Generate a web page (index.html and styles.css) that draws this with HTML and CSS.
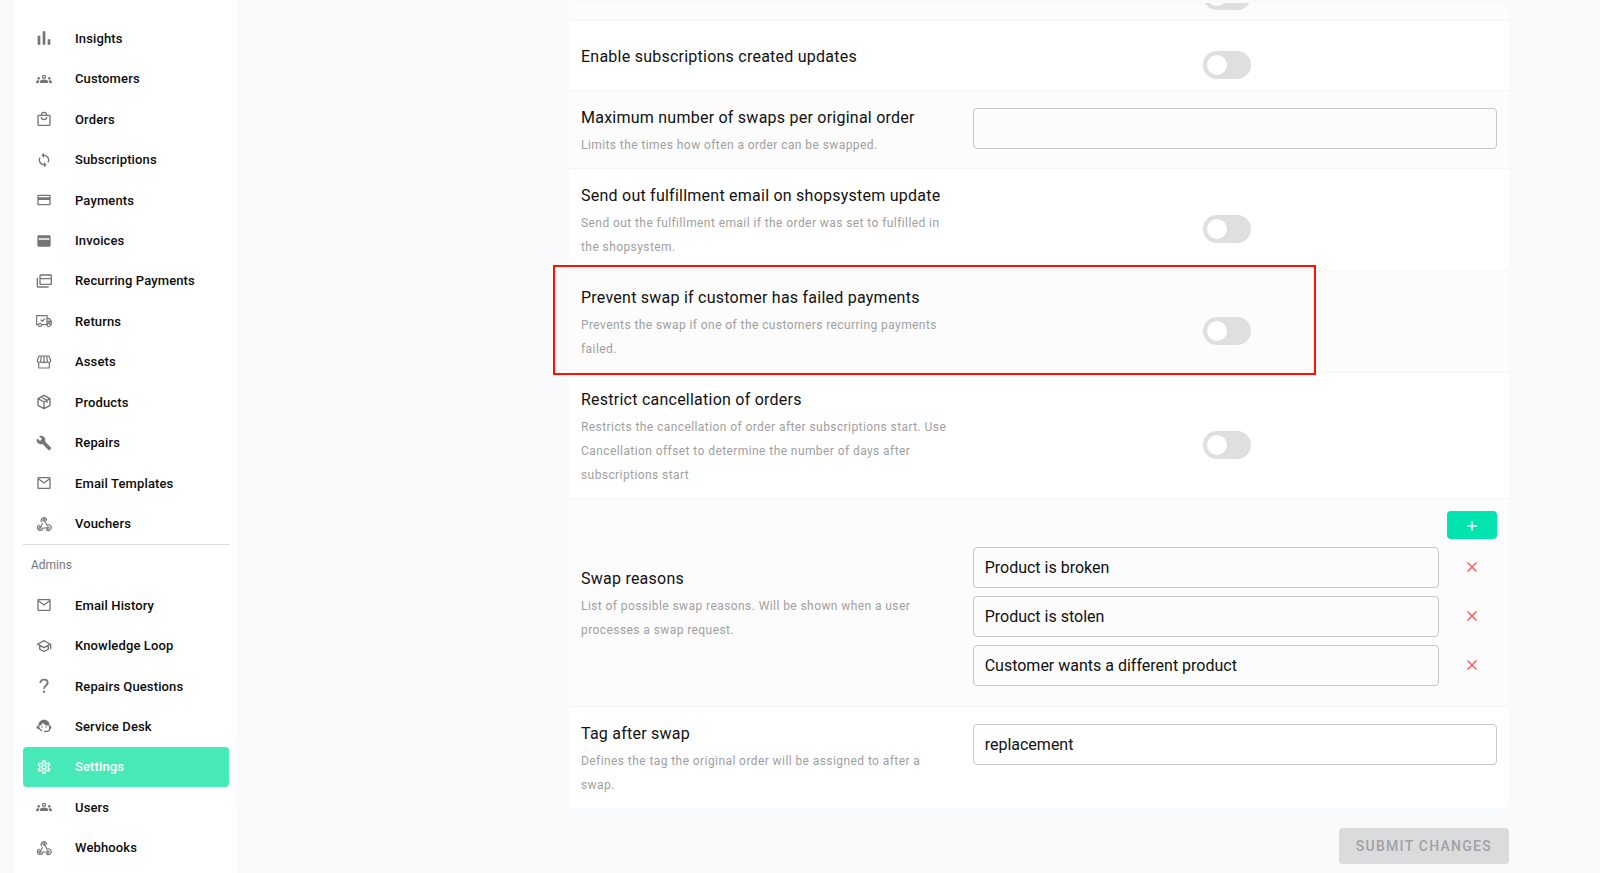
FILE: index.html
```html
<!DOCTYPE html>
<html lang="en">
<head>
<meta charset="utf-8">
<meta name="viewport" content="width=device-width, initial-scale=1">
<title>Settings</title>
<link rel="stylesheet" href="styles.css">
</head>
<body>
<svg class="sprite" aria-hidden="true">
  <symbol id="i-bars" viewBox="0 0 24 24"><path d="M2.500 8.500h4V22h-4zM10 2h4v20h-4zM17.500 14h4v8h-4z"/></symbol>
  <symbol id="i-group" viewBox="0 0 24 24"><path fill-rule="evenodd" d="M12 12.750c1.630 0 3.070.390 4.240.900 1.080.480 1.760 1.560 1.760 2.730V18H6v-1.610c0-1.180.680-2.260 1.760-2.730 1.170-.520 2.610-.910 4.240-.910zM4 13c1.100 0 2-.900 2-2s-.900-2-2-2-2 .900-2 2 .900 2 2 2zm1.130 1.100c-.370-.060-.740-.100-1.130-.100-.990 0-1.930.210-2.780.580C.480 14.900 0 15.620 0 16.430V18h4.500v-1.610c0-.830.230-1.610.630-2.290zM20 13c1.100 0 2-.900 2-2s-.900-2-2-2-2 .900-2 2 .900 2 2 2zm4 3.430c0-.810-.480-1.530-1.220-1.850-.850-.370-1.790-.580-2.780-.580-.390 0-.760.040-1.130.100.400.680.630 1.460.630 2.290V18H24v-1.570zM12 5.500a3.300 3.300 0 1 1 0 6.600 3.300 3.300 0 0 1 0-6.600zm0 1.900a1.400 1.400 0 1 0 0 2.800 1.400 1.400 0 0 0 0-2.800z"/></symbol>
  <symbol id="i-bag" viewBox="0 0 24 24"><path fill="none" stroke="currentColor" stroke-width="2" d="M4 6.500h16a1 1 0 0 1 1 1V20a1.500 1.500 0 0 1-1.500 1.500h-15A1.500 1.500 0 0 1 3 20V7.500a1 1 0 0 1 1-1zM8 9a4 4 0 0 0 8 0M8 6a4 4 0 0 1 8 0"/></symbol>
  <symbol id="i-sync" viewBox="0 0 24 24"><path d="M12 4V1L8 5l4 4V6c3.310 0 6 2.690 6 6 0 1.010-.250 1.970-.700 2.800l1.460 1.460C19.540 15.030 20 13.570 20 12c0-4.420-3.580-8-8-8zm0 14c-3.310 0-6-2.690-6-6 0-1.010.250-1.970.700-2.800L5.240 7.740C4.460 8.970 4 10.430 4 12c0 4.420 3.580 8 8 8v3l4-4-4-4v3z"/></symbol>
  <symbol id="i-card" viewBox="0 0 24 24"><path d="M20 4H4c-1.110 0-2 .890-2 2v12c0 1.110.890 2 2 2h16c1.110 0 2-.890 2-2V6c0-1.110-.890-2-2-2zm0 14H4v-6h16v6zm0-10H4V6h16v2z"/></symbol>
  <symbol id="i-invoice" viewBox="0 0 24 24"><path fill-rule="evenodd" d="M4 3.500h16a2 2 0 0 1 2 2v13a2 2 0 0 1-2 2H4a2 2 0 0 1-2-2v-13a2 2 0 0 1 2-2zM4 8v2.200h16V8z"/></symbol>
  <symbol id="i-cards" viewBox="0 0 24 24"><path fill="none" stroke="currentColor" stroke-width="2" d="M7 3h15a1 1 0 0 1 1 1v12a1 1 0 0 1-1 1H7a1 1 0 0 1-1-1V4a1 1 0 0 1 1-1zM6 8.500h17M2 7v13a1 1 0 0 0 1 1h16"/></symbol>
  <symbol id="i-truck" viewBox="0 0 24 24"><path fill="none" stroke="currentColor" stroke-width="1.800" d="M3.500 17.500H1V4h15.500v13.500H9M16.500 8.500h3.500l3 4v5h-1.500M7 10l2.500 2.500L13.500 8"/><circle cx="6" cy="18" r="2.300" fill="none" stroke="currentColor" stroke-width="1.800"/><circle cx="19" cy="18" r="2.300" fill="none" stroke="currentColor" stroke-width="1.800"/><path d="M17 11.500h6v3h-6z"/></symbol>
  <symbol id="i-store" viewBox="0 0 24 24"><path fill="none" stroke="currentColor" stroke-width="1.800" d="M4 12v8a1 1 0 0 0 1 1h14a1 1 0 0 0 1-1v-8M4.500 3h15L22 9.500a2.500 2.500 0 0 1-5 1 2.500 2.500 0 0 1-5 0 2.500 2.500 0 0 1-5 0 2.500 2.500 0 0 1-5-1zM8 3l-1 7.500M12 3v7.500M16 3l1 7.500"/></symbol>
  <symbol id="i-box" viewBox="0 0 24 24"><path fill="none" stroke="currentColor" stroke-width="2" stroke-linejoin="round" d="M12 2l9 5v10l-9 5-9-5V7zM3 7l9 5 9-5M12 12v10M7.500 4.500l9 5V13"/></symbol>
  <symbol id="i-wrench" viewBox="0 0 24 24"><path d="M22.700 19l-9.100-9.100c.900-2.300.400-5-1.500-6.900-2-2-5-2.400-7.400-1.300L9 6 6 9 1.600 4.700C.400 7.100.900 10.100 2.900 12.100c1.900 1.900 4.600 2.400 6.900 1.500l9.100 9.100c.400.400 1 .400 1.400 0l2.300-2.300c.500-.400.500-1.100.100-1.400z"/></symbol>
  <symbol id="i-mail" viewBox="0 0 24 24"><path fill="none" stroke="currentColor" stroke-width="2" d="M4 4h16a1 1 0 0 1 1 1v14a1 1 0 0 1-1 1H4a1 1 0 0 1-1-1V5a1 1 0 0 1 1-1zM4 6l8 6 8-6"/></symbol>
  <symbol id="i-hook" viewBox="0 0 24 24"><g fill="none" stroke="currentColor" stroke-width="1.700"><path d="M8.500 9.200A4.200 4.200 0 1 1 16 7M12.500 6l4 7.800a4.200 4.200 0 1 1-1.300 6.200M17.500 18H10.500a4.200 4.200 0 1 1-5-4.500M6 18l4-7.500"/><circle cx="12" cy="6" r="1.600"/><circle cx="6" cy="18" r="1.600"/><circle cx="18" cy="18" r="1.600"/></g></symbol>
  <symbol id="i-school" viewBox="0 0 24 24"><path fill="none" stroke="currentColor" stroke-width="2" d="M12 4L2.500 9.200 12 14.500l9.500-5.300zM5.500 11v5.500l6.500 3.700 6.500-3.700V11M22 9v8"/></symbol>
  <symbol id="i-help" viewBox="0 0 24 24"><path fill="none" stroke="currentColor" stroke-width="2.800" d="M6.500 7.500c0-3 2.200-5 5.500-5s5.500 2 5.500 4.800C17.500 11 12 11.500 12 16"/><path d="M10.500 19h3v3.200h-3z"/></symbol>
  <symbol id="i-agent" viewBox="0 0 24 24"><path fill="none" stroke="currentColor" stroke-width="1.800" d="M20.500 12v4a4 4 0 0 1-4 4H12M4 13a8 8 0 0 0 5.500 6.500"/><path d="M3.500 11.500C3.500 6 7 2.500 12 2.500s8.500 3.500 8.500 9h-2C15 11.500 12 10 10.500 7 9.500 9.500 7 11.500 3.500 12.500zM2 11.500h2v5H3a2 2 0 0 1-2-2v-2a1 1 0 0 1 1-1zM22 11.500h-2v5h1a2 2 0 0 0 2-2v-2a1 1 0 0 0-1-1z"/><circle cx="9" cy="13.500" r="1.200"/><circle cx="15" cy="13.500" r="1.200"/></symbol>
  <symbol id="i-cog" viewBox="0 0 24 24"><path d="M12,8A4,4 0 0,1 16,12A4,4 0 0,1 12,16A4,4 0 0,1 8,12A4,4 0 0,1 12,8M12,10A2,2 0 0,0 10,12A2,2 0 0,0 12,14A2,2 0 0,0 14,12A2,2 0 0,0 12,10M10,22C9.750,22 9.540,21.820 9.500,21.580L9.130,18.930C8.500,18.680 7.960,18.340 7.440,17.940L4.950,18.950C4.730,19.030 4.460,18.950 4.340,18.730L2.340,15.270C2.210,15.050 2.270,14.780 2.460,14.630L4.570,12.970L4.500,12L4.570,11L2.460,9.370C2.270,9.220 2.210,8.950 2.340,8.730L4.340,5.270C4.460,5.050 4.730,4.960 4.950,5.050L7.440,6.050C7.960,5.660 8.500,5.320 9.130,5.070L9.500,2.420C9.540,2.180 9.750,2 10,2H14C14.250,2 14.460,2.180 14.500,2.420L14.870,5.070C15.500,5.320 16.040,5.660 16.560,6.050L19.050,5.050C19.270,4.960 19.540,5.050 19.660,5.270L21.660,8.730C21.790,8.950 21.730,9.220 21.540,9.370L19.430,11L19.500,12L19.430,13L21.540,14.630C21.730,14.780 21.790,15.050 21.660,15.270L19.660,18.730C19.540,18.950 19.270,19.040 19.050,18.950L16.560,17.950C16.040,18.340 15.500,18.680 14.870,18.930L14.500,21.580C14.460,21.820 14.250,22 14,22H10M11.250,4L10.880,6.610C9.680,6.860 8.620,7.500 7.850,8.390L5.440,7.350L4.690,8.650L6.800,10.200C6.400,11.370 6.400,12.640 6.800,13.800L4.680,15.360L5.430,16.660L7.860,15.620C8.630,16.500 9.680,17.140 10.870,17.380L11.240,20H12.760L13.130,17.390C14.320,17.140 15.370,16.500 16.140,15.620L18.570,16.660L19.320,15.360L17.200,13.810C17.600,12.640 17.600,11.370 17.200,10.200L19.310,8.650L18.560,7.350L16.150,8.390C15.380,7.500 14.320,6.860 13.120,6.620L12.750,4H11.250Z"/></symbol>
  <symbol id="i-plus" viewBox="0 0 10 10"><path fill="none" stroke="currentColor" stroke-width="1.400" d="M5 0v10M0 5h10"/></symbol>
  <symbol id="i-x" viewBox="0 0 10 10"><path fill="none" stroke="currentColor" stroke-width="1.300" d="M.5.5l9 9M9.500.5l-9 9"/></symbol>
</svg>
<div class="layout">
  <nav class="sidebar" aria-label="Main">
    <ul class="nav nav-main">
      <li><a class="nav-link" href="#"><svg class="icon"><use href="#i-bars"/></svg>Insights</a></li>
      <li><a class="nav-link" href="#"><svg class="icon"><use href="#i-group"/></svg>Customers</a></li>
      <li><a class="nav-link" href="#"><svg class="icon"><use href="#i-bag"/></svg>Orders</a></li>
      <li><a class="nav-link" href="#"><svg class="icon"><use href="#i-sync"/></svg>Subscriptions</a></li>
      <li><a class="nav-link" href="#"><svg class="icon"><use href="#i-card"/></svg>Payments</a></li>
      <li><a class="nav-link" href="#"><svg class="icon"><use href="#i-invoice"/></svg>Invoices</a></li>
      <li><a class="nav-link" href="#"><svg class="icon"><use href="#i-cards"/></svg>Recurring Payments</a></li>
      <li><a class="nav-link" href="#"><svg class="icon"><use href="#i-truck"/></svg>Returns</a></li>
      <li><a class="nav-link" href="#"><svg class="icon"><use href="#i-store"/></svg>Assets</a></li>
      <li><a class="nav-link" href="#"><svg class="icon"><use href="#i-box"/></svg>Products</a></li>
      <li><a class="nav-link" href="#"><svg class="icon"><use href="#i-wrench"/></svg>Repairs</a></li>
      <li><a class="nav-link" href="#"><svg class="icon"><use href="#i-mail"/></svg>Email Templates</a></li>
      <li><a class="nav-link" href="#"><svg class="icon"><use href="#i-hook"/></svg>Vouchers</a></li>
    </ul>
    <h2 class="nav-heading">Admins</h2>
    <ul class="nav nav-admin">
      <li><a class="nav-link" href="#"><svg class="icon"><use href="#i-mail"/></svg>Email History</a></li>
      <li><a class="nav-link" href="#"><svg class="icon"><use href="#i-school"/></svg>Knowledge Loop</a></li>
      <li><a class="nav-link" href="#"><svg class="icon"><use href="#i-help"/></svg>Repairs Questions</a></li>
      <li><a class="nav-link" href="#"><svg class="icon"><use href="#i-agent"/></svg>Service Desk</a></li>
      <li><a class="nav-link active" href="#" aria-current="page"><svg class="icon"><use href="#i-cog"/></svg>Settings</a></li>
      <li><a class="nav-link" href="#"><svg class="icon"><use href="#i-group"/></svg>Users</a></li>
      <li><a class="nav-link" href="#"><svg class="icon"><use href="#i-hook"/></svg>Webhooks</a></li>
    </ul>
  </nav>
  <main class="content">
    <form class="settings">
      <div class="card">
        <div class="row row-cut">
          <div class="text"></div>
          <div class="control control-switch"><input class="switch" type="checkbox" aria-label="Setting"></div>
        </div>
        <div class="row">
          <div class="text"><label class="title" for="created">Enable subscriptions created updates</label></div>
          <div class="control control-switch"><input class="switch" type="checkbox" id="created"></div>
        </div>
        <div class="row">
          <div class="text"><label class="title" for="max">Maximum number of swaps per original order</label><p class="hint">Limits the times how often a order can be swapped.</p></div>
          <div class="control control-field"><input class="field" type="text" id="max"></div>
        </div>
        <div class="row">
          <div class="text"><label class="title" for="fulfil">Send out fulfillment email on shopsystem update</label><p class="hint">Send out the fulfillment email if the order was set to fulfilled in the shopsystem.</p></div>
          <div class="control control-switch"><input class="switch" type="checkbox" id="fulfil"></div>
        </div>
        <div class="row row-marked">
          <div class="text"><label class="title" for="prevent">Prevent swap if customer has failed payments</label><p class="hint">Prevents the swap if one of the customers recurring payments failed.</p></div>
          <div class="control control-switch"><input class="switch" type="checkbox" id="prevent"></div>
        </div>
        <div class="row">
          <div class="text"><label class="title" for="restrict">Restrict cancellation of orders</label><p class="hint">Restricts the cancellation of order after subscriptions start. Use Cancellation offset to determine the number of days after subscriptions start</p></div>
          <div class="control control-switch"><input class="switch" type="checkbox" id="restrict"></div>
        </div>
        <div class="row">
          <div class="text"><span class="title" id="reasons">Swap reasons</span><p class="hint">List of possible swap reasons. Will be shown when a user processes a swap request.</p></div>
          <div class="control reasons" role="group" aria-labelledby="reasons">
            <button class="add" type="button" aria-label="Add reason"><svg class="glyph"><use href="#i-plus"/></svg></button>
            <div class="reason"><input class="field" type="text" value="Product is broken" aria-label="Reason 1"><button class="remove" type="button" aria-label="Remove reason 1"><svg class="glyph"><use href="#i-x"/></svg></button></div>
            <div class="reason"><input class="field" type="text" value="Product is stolen" aria-label="Reason 2"><button class="remove" type="button" aria-label="Remove reason 2"><svg class="glyph"><use href="#i-x"/></svg></button></div>
            <div class="reason"><input class="field" type="text" value="Customer wants a different product" aria-label="Reason 3"><button class="remove" type="button" aria-label="Remove reason 3"><svg class="glyph"><use href="#i-x"/></svg></button></div>
          </div>
        </div>
        <div class="row">
          <div class="text"><label class="title" for="tag">Tag after swap</label><p class="hint">Defines the tag the original order will be assigned to after a swap.</p></div>
          <div class="control control-field"><input class="field" type="text" id="tag" value="replacement"></div>
        </div>
      </div>
      <button class="submit" type="submit" disabled>SUBMIT CHANGES</button>
    </form>
  </main>
</div>
</body>
</html>
```
FILE: styles.css
```css
* { box-sizing: border-box; }

body {
  margin: 0;
  background: #f9fafc;
  color: #111;
  font-family: Roboto, "Liberation Sans", sans-serif;
  font-size: 16px;
}

button, input { font: inherit; color: inherit; }

.sprite { display: none; }

.layout {
  display: flex;
  min-height: 100vh;
}

/* Sidebar */
.sidebar {
  flex: 0 0 222px;
  margin-left: 15px;
  padding: 18px 8px 4px;
  background: #fff;
}

.nav {
  display: grid;
  grid-auto-rows: 1fr;
  margin: 0;
  padding: 0;
  list-style: none;
}

.nav-main {
  min-height: 527px;
  border-bottom: 1px solid #dcdcdc;
}

.nav-admin { min-height: 283px; }

.nav-link {
  display: flex;
  align-items: center;
  gap: 23px;
  height: 100%;
  padding: 0 13px;
  border-radius: 4px;
  color: #0c0c0c;
  font-size: 13px;
  font-weight: 500;
  letter-spacing: 0.01em;
  text-decoration: none;
}

.icon {
  flex: none;
  width: 16px;
  height: 16px;
  color: #757575;
  fill: currentColor;
}

.nav-link.active { background: #47e9b9; color: #fff; }
.nav-link.active .icon { color: #fff; }

.nav-heading {
  margin: 0;
  padding: 0 8px;
  color: #757575;
  font-size: 12px;
  font-weight: 400;
  line-height: 40px;
}

/* Settings form */
.content {
  flex: 1;
  min-width: 0;
  padding: 3px 91px 8px 332px;
}

.settings {
  display: flex;
  flex-direction: column;
  gap: 20px;
}

.card {
  border-radius: 4px;
  background: #fff;
}

.row {
  position: relative;
  display: grid;
  grid-template-columns: 5fr 7fr;
  align-items: center;
  min-height: 70px;
  padding: 10px 0;
  border-top: 1px solid #f5f5f5;
}

.row:nth-child(odd) { background: #fcfcfc; }
.row:last-child { border-radius: 0 0 4px 4px; }

.row-cut {
  align-content: end;
  height: 17px;
  min-height: 0;
  padding-top: 0;
  border-top: 0;
  overflow: hidden;
}

.text { padding: 4px 12px 1px; }

.title {
  display: block;
  line-height: 26px;
  letter-spacing: 0.015em;
}

.hint {
  margin: 2px 0 0;
  color: #a0a0a0;
  font-size: 12px;
  line-height: 24px;
  letter-spacing: 0.035em;
}

.control { padding: 0 12px; }

.control-switch {
  display: flex;
  justify-content: center;
  padding: 18px 28px 0 12px;
}

.switch {
  display: flex;
  align-items: center;
  width: 48px;
  height: 28px;
  margin: 0;
  padding: 4px;
  border-radius: 14px;
  background: #dfdfdf;
  appearance: none;
}

.switch::before {
  width: 20px;
  height: 20px;
  border-radius: 50%;
  background: #fff;
  content: "";
}

.switch:checked { justify-content: flex-end; background: #00e5b0; }

.control-field {
  align-self: start;
  padding-top: 7px;
}

.field {
  display: block;
  width: 100%;
  min-width: 0;
  height: 41px;
  padding: 0 11px;
  border: 1px solid #c6c6c6;
  border-radius: 4px;
  background: transparent;
}

.reasons {
  display: flex;
  flex-direction: column;
  gap: 8px;
  padding-top: 2px;
  padding-bottom: 10px;
}

.add {
  align-self: flex-end;
  width: 50px;
  height: 28px;
  padding: 0;
  border: 0;
  border-radius: 4px;
  background: #00e5b0;
  color: #fff;
}

.reason {
  display: flex;
  gap: 8px;
}

.remove {
  flex: 0 0 50px;
  padding: 0 0 3px;
  border: 0;
  background: none;
  color: #ff5252;
}

.glyph {
  width: 10px;
  height: 10px;
}

/* Outline drawn over the neighbouring rows */
.row-marked::after {
  position: absolute;
  top: -6px;
  right: 193px;
  bottom: -3px;
  left: -16px;
  z-index: 1;
  border: 2px solid #ff1100;
  pointer-events: none;
  content: "";
}

.submit {
  align-self: flex-end;
  height: 36px;
  padding: 0 17px;
  border: 0;
  border-radius: 4px;
  background: #dadbdd;
  color: #a1a2a4;
  font-size: 14px;
  font-weight: 500;
  letter-spacing: 0.09em;
}
```
